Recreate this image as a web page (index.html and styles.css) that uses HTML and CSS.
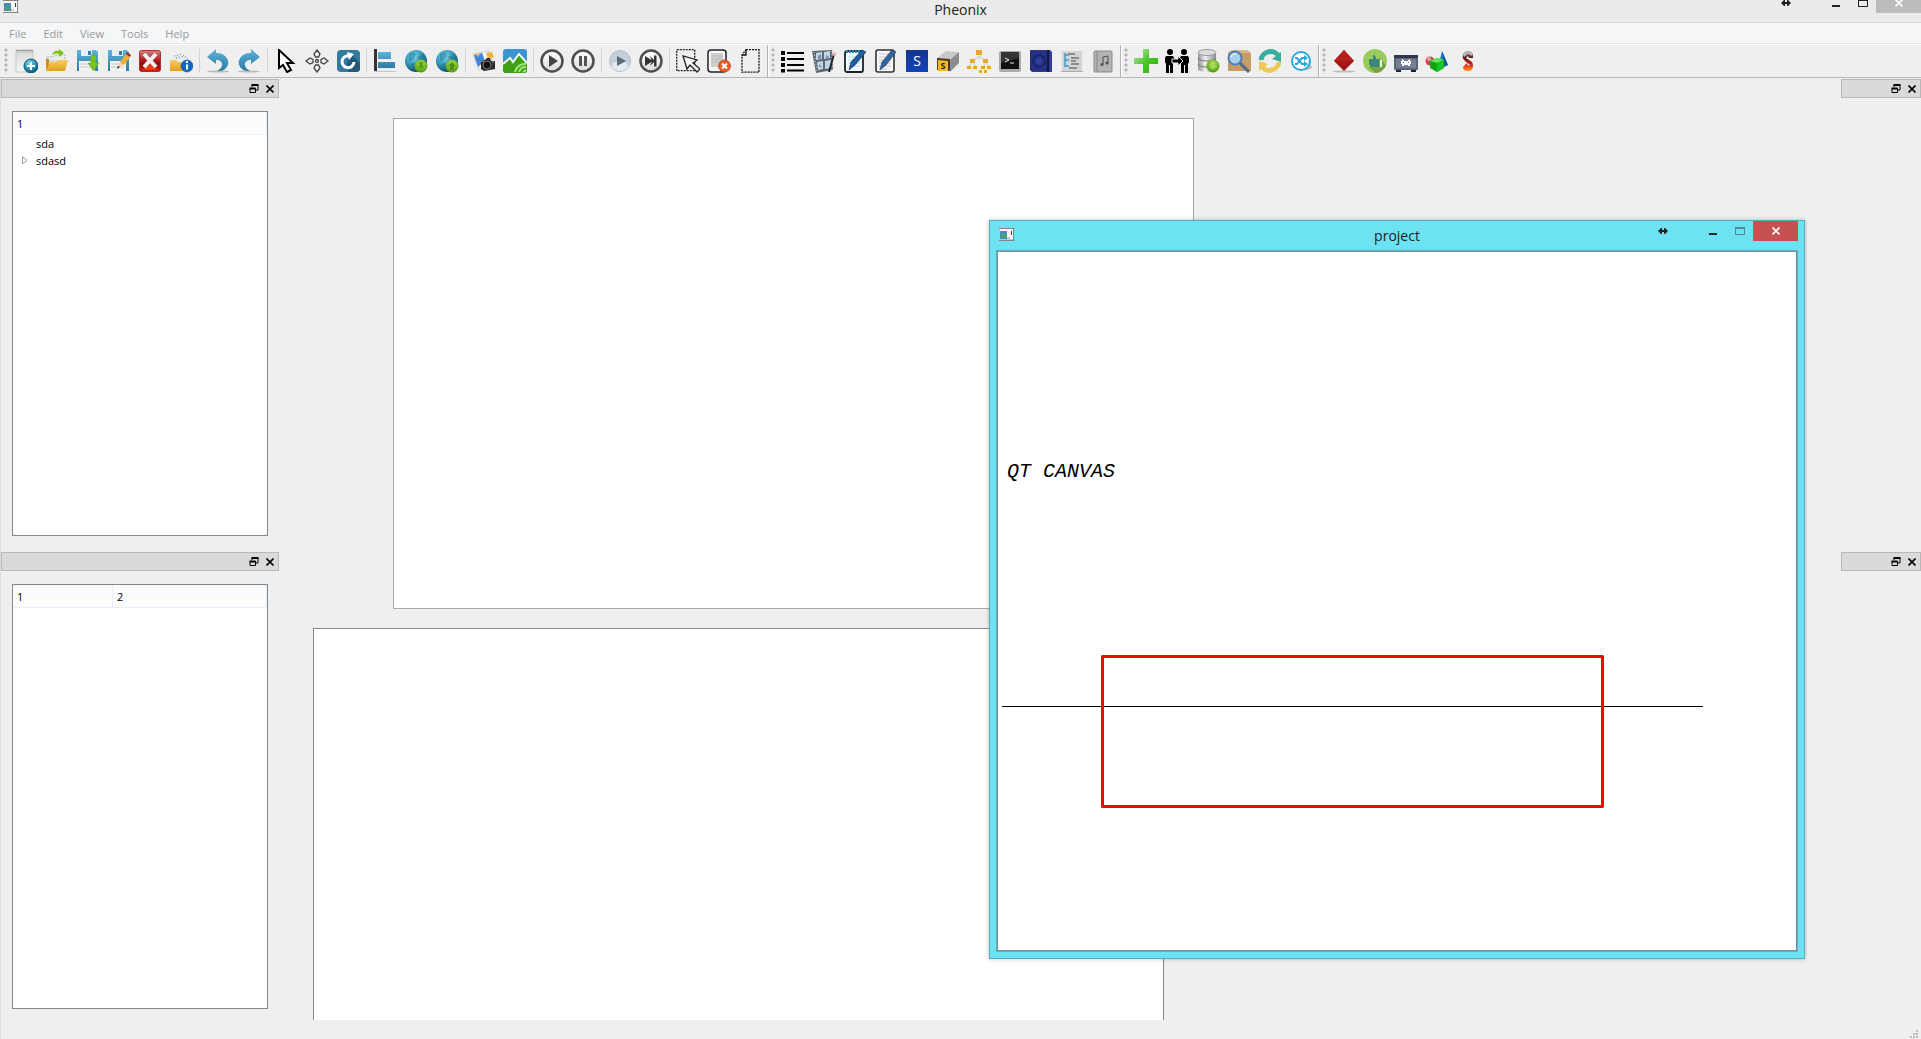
FILE: index.html
```html
<!DOCTYPE html>
<html lang="en">
<head>
<meta charset="utf-8">
<title>Pheonix</title>
<link rel="stylesheet" href="styles.css">
</head>
<body>
<svg class="defs" width="0" height="0" aria-hidden="true">
  <defs>
    <linearGradient id="blue" x1="0" y1="0" x2="0" y2="1"><stop offset="0" stop-color="#5fb3dc"/><stop offset="1" stop-color="#2b7ba3"/></linearGradient>
    <linearGradient id="gold" x1="0" y1="0" x2="0" y2="1"><stop offset="0" stop-color="#f9cc62"/><stop offset="1" stop-color="#e2a01c"/></linearGradient>
    <linearGradient id="paper" x1="0" y1="0" x2="0" y2="1"><stop offset="0" stop-color="#b9bbbc"/><stop offset=".2" stop-color="#dfe0e1"/><stop offset="1" stop-color="#f6f6f6"/></linearGradient>
    <linearGradient id="red" x1="0" y1="0" x2="0" y2="1"><stop offset="0" stop-color="#d98080"/><stop offset=".45" stop-color="#b32020"/><stop offset=".6" stop-color="#8c0f0f"/><stop offset="1" stop-color="#c81c10"/></linearGradient>
    <radialGradient id="globe" cx=".4" cy=".3" r=".7"><stop offset="0" stop-color="#7ad6ee"/><stop offset=".6" stop-color="#2f93b5"/><stop offset="1" stop-color="#115068"/></radialGradient>
    <radialGradient id="lime" cx=".5" cy=".35" r=".65"><stop offset="0" stop-color="#b6e45c"/><stop offset="1" stop-color="#4c9a0c"/></radialGradient>
    <linearGradient id="disc" x1="0" y1="0" x2="0" y2="1"><stop offset="0" stop-color="#fff"/><stop offset="1" stop-color="#dcdcdc"/></linearGradient>
    <linearGradient id="green" x1="0" y1="0" x2="1" y2="1"><stop offset="0" stop-color="#bfe8b4"/><stop offset=".5" stop-color="#4cc62c"/><stop offset="1" stop-color="#23b400"/></linearGradient>
    <linearGradient id="steel" x1="0" y1="0" x2="1" y2="0"><stop offset="0" stop-color="#8f9193"/><stop offset=".4" stop-color="#f0f0f0"/><stop offset="1" stop-color="#8a8c8e"/></linearGradient>
    <linearGradient id="navy" x1="0" y1="0" x2="0" y2="1"><stop offset="0" stop-color="#16328f"/><stop offset="1" stop-color="#1443b8"/></linearGradient>
    <linearGradient id="flame" x1="0" y1="0" x2="0" y2="1"><stop offset="0" stop-color="#777"/><stop offset=".35" stop-color="#5a1512"/><stop offset=".65" stop-color="#e01b12"/><stop offset="1" stop-color="#ffa126"/></linearGradient>
    <symbol id="app" viewBox="0 0 16 14"><path d="M1 1h13v10H1z" fill="#fafafa"/><path d="M0 .5h15.500M0 12.500h15.500M14.500 0v13" stroke="#858585" fill="none"/><path d="M1 3h7v8H1z" fill="#4c87b5"/><path d="M2 7l3-2 2 2v3H2z" fill="#4aa36e"/><path d="M8 9h3v2H8z" fill="#ccc"/><path d="M12 3h1v4h-1z" fill="#26406e"/></symbol>
    <symbol id="float" viewBox="0 0 10 10"><path d="M3 3V1h6v5H7" fill="none" stroke="#000"/><path d="M2.500 1h7" stroke="#000" stroke-width="2"/><path d="M1 4.500h5.500v4H1z" fill="none" stroke="#000"/><path d="M.5 4.500h6" stroke="#000" stroke-width="2"/></symbol>
    <symbol id="cross" viewBox="0 0 8 8"><path d="M.5.5l7 7M7.500.5l-7 7" stroke="currentColor" stroke-width="1.600"/></symbol>
    <symbol id="arrows" viewBox="0 0 10 8"><path d="M0 4l3-3h1v2h2V1h1l3 3-3 3H6V5H4v2H3z" fill="currentColor"/></symbol>
  </defs>
</svg>

<div class="app">
  <header class="titlebar">
    <svg class="app-icon" width="16" height="14"><use href="#app"/></svg>
    <h1 class="title">Pheonix</h1>
    <div class="controls">
      <button class="ctl resize" aria-label="Resize"><svg width="10" height="8"><use href="#arrows"/></svg></button>
      <button class="ctl" aria-label="Minimize"><svg width="10" height="8"><path d="M0 6h8v2H0z" fill="currentColor"/></svg></button>
      <button class="ctl" aria-label="Maximize"><svg width="10" height="8"><path d="M0 0h10v8H0zM1 2v5h8V2z" fill="currentColor" fill-rule="evenodd"/></svg></button>
      <button class="ctl close" aria-label="Close"><svg width="8" height="8"><use href="#cross"/></svg></button>
    </div>
  </header>

  <nav class="menubar">
    <button class="menu">File</button><button class="menu">Edit</button><button class="menu">View</button><button class="menu">Tools</button><button class="menu">Help</button>
  </nav>

  <div class="toolbars">
    <div class="toolbar" role="toolbar" aria-label="Main">
      <span class="grip"></span>
      <button class="tool" aria-label="New"><svg viewBox="0 0 24 24"><path d="M2 1h17v22H2z" fill="url(#paper)" stroke="#c4c6c7"/><path d="M2 1h17v1H2z" fill="#9fa1a2"/><circle cx="17" cy="17" r="7" fill="url(#globe)" stroke="#0f5876"/><path d="M17 13v8M13 17h8" stroke="#fff" stroke-width="2"/></svg></button>
      <button class="tool" aria-label="Open"><svg viewBox="0 0 24 24"><path d="M2 8h6l2-2h10v6H2z" fill="#e9ecee" stroke="#aab4b8" stroke-dasharray="2 1"/><path d="M1 10h3v10H1z" fill="#cf8f14"/><path d="M5 13h6l2-2h10l-3 11H1z" fill="url(#gold)"/><path d="M7 6c1-4 5-5 7-4V0l5 4-5 4V5c-3-1-5 0-7 1z" fill="#7cc40e"/></svg></button>
      <button class="tool" aria-label="Save"><svg viewBox="0 0 24 24"><path d="M1 1h19l2 2v19H1z" fill="url(#blue)"/><path d="M5 1h11v6H5z" fill="#e8f0f4"/><path d="M12 2h3v4h-3z" fill="#2f7fa8"/><path d="M3 12h16v10H3z" fill="#f3f3f3"/><path d="M4 15h12M4 18h12" stroke="#c2c8ca"/><path d="M15 6h5v8h3l-5.500 8L12 14h3z" fill="#78c41d" stroke="#5da312" stroke-width=".5"/></svg></button>
      <button class="tool" aria-label="Save as"><svg viewBox="0 0 24 24"><path d="M1 1h19l2 2v19H1z" fill="url(#blue)"/><path d="M5 1h11v6H5z" fill="#e8f0f4"/><path d="M12 2h3v4h-3z" fill="#2f7fa8"/><path d="M3 12h16v10H3z" fill="#f3f3f3"/><path d="M4 15h12M4 18h12" stroke="#c2c8ca"/><path d="M11 18l2-5 6-8 4 3-6 8z" fill="#f0ad2d"/><path d="M19 5l1-2 4 3-1 2z" fill="#a22a24"/><path d="M13 13l4 3-6 3z" fill="#eed7ae"/><path d="M11 17l2 1-3 2z" fill="#222"/></svg></button>
      <button class="tool" aria-label="Delete"><svg viewBox="0 0 24 24"><rect x="1.500" y="1.500" width="21" height="21" rx="2" fill="url(#red)" stroke="#a33"/><path d="M12 15l8 6H4z" fill="#f53a12"/><path d="M6 5l12 13M18 5L6 18" stroke="#f2f2f2" stroke-width="4"/></svg></button>
      <button class="tool" aria-label="Properties"><svg viewBox="0 0 24 24"><path d="M3 9l3-3 8-1 7 4v4H3z" fill="#e9ecee"/><path d="M5 7l8-2M7 9l9-2M14 6l5 4" stroke="#567f91" stroke-dasharray="1 2"/><path d="M1 11h6l2 2h12v9H1z" fill="url(#gold)"/><circle cx="18" cy="17" r="6" fill="#1469bd" stroke="#0c4a8d" stroke-width=".5"/><path d="M18 12v2M18 15.500v5" stroke="#fff" stroke-width="2"/></svg></button>
      <span class="sep"></span>
      <button class="tool" aria-label="Undo"><svg viewBox="0 0 24 24"><ellipse cx="12" cy="22.500" rx="11" ry="1" fill="#bbb"/><path d="M10 0v4c9-1 17 9 9 16-2 2-5 2-8 2 7-3 7-11-1-11v4L1 8z" fill="url(#blue)"/></svg></button>
      <button class="tool" aria-label="Redo"><svg viewBox="0 0 24 24"><ellipse cx="12" cy="22.500" rx="11" ry="1" fill="#bbb"/><path d="M14 0v4C5 3-3 13 5 20c2 2 5 2 8 2-7-3-7-11 1-11v4l9-7z" fill="url(#blue)"/></svg></button>
      <span class="sep"></span>
      <button class="tool" aria-label="Pointer"><svg viewBox="0 0 24 24"><path d="M5 1v18l4-3 4 7 4-2-4-7h6z" fill="#fff" stroke="#000" stroke-width="2"/></svg></button>
      <button class="tool" aria-label="Move"><svg viewBox="0 0 24 24" fill="none" stroke="#444" stroke-width="1.300"><path d="M12 1l3 4-1.500 3h-3L9 5zM12 23l3-4-1.500-3h-3L9 19zM1 12l4-3 3 1.500v3L5 15zM23 12l-4-3-3 1.500v3l3 1.500z"/><circle cx="12" cy="12" r="1.500"/></svg></button>
      <button class="tool" aria-label="Rotate"><svg viewBox="0 0 24 24"><rect x="1" y="1" width="23" height="22" rx="4" fill="#31799d"/><path d="M9 19l6-14 9 9v5a4 4 0 0 1-4 4h-7z" fill="#225a78"/><path d="M15 7.500A6 6 0 1 0 18 13" fill="none" stroke="#fff" stroke-width="3"/><path d="M11 3l7 2-5 6z" fill="#fff"/></svg></button>
      <span class="sep"></span>
      <button class="tool" aria-label="Align left"><svg viewBox="0 0 24 24"><path d="M2 22.500h21" stroke="#c4c4c4"/><path d="M1 0h3v22H1z" fill="#333"/><path d="M5 3h13v7H5zM5 13h17v6H5z" fill="url(#blue)"/></svg></button>
      <button class="tool" aria-label="Download"><svg viewBox="0 0 24 24"><circle cx="12" cy="12" r="11" fill="url(#globe)"/><path d="M5 5l5-2 2 3-3 5-4 1zM13 8l6-3 3 4-6 4zM6 15l4-1 2 5-3 2z" fill="#14627f" opacity=".4"/><circle cx="17" cy="17" r="6.500" fill="url(#lime)"/><path d="M15 13h4v4h2l-4 4-4-4h2z" fill="#5ca51a"/></svg></button>
      <button class="tool" aria-label="Upload"><svg viewBox="0 0 24 24"><circle cx="12" cy="12" r="11" fill="url(#globe)"/><path d="M5 5l5-2 2 3-3 5-4 1zM13 8l6-3 3 4-6 4zM6 15l4-1 2 5-3 2z" fill="#14627f" opacity=".4"/><circle cx="17" cy="17" r="6.500" fill="url(#lime)"/><path d="M15 21h4v-4h2l-4-4-4 4h2z" fill="#4d9214"/></svg></button>
      <span class="sep"></span>
      <button class="tool" aria-label="Capture"><svg viewBox="0 0 24 24"><path d="M1 5l16-3 4 12-14 7z" fill="#f4f4f4" stroke="#ccc"/><path d="M2 6l8-2 3 8-7 6z" fill="#3e87e0"/><path d="M14 4l6-1 2 5-6 2z" fill="#eeb443"/><path d="M3 4l5 1-2 3z" fill="#f4bd46"/><path d="M9 11h4l2-2h3l1 3h4v8l-11 2-3-2z" fill="#292b2d"/><circle cx="15" cy="16" r="4" fill="#111" stroke="#777"/><path d="M9 12h3M20 13h2" stroke="#aaa"/></svg></button>
      <button class="tool" aria-label="Landscape"><svg viewBox="0 0 24 24"><defs><clipPath id="tile"><rect width="24" height="24" rx="3"/></clipPath></defs><g clip-path="url(#tile)"><path d="M0 0h24v24H0z" fill="#3d94d0"/><path d="M0 15l7-6 3 4 6-8 8 9v10H0z" fill="#3f9f16"/><path d="M0 15l7-6 3 4 6-8 8 9" fill="none" stroke="#f1fbe9" stroke-width="2"/><path d="M12 23a10 10 0 0 1 11-8M16 23a7 7 0 0 1 7-5M20 23l3-2" fill="none" stroke="#a6e579" stroke-width="2"/></g></svg></button>
      <span class="sep"></span>
      <button class="tool" aria-label="Play"><svg viewBox="0 0 24 24"><circle cx="12" cy="12" r="10.500" fill="url(#disc)" stroke="#4e4e4e" stroke-width="2.500"/><path d="M9 6l9 6-9 6z" fill="#444"/></svg></button>
      <button class="tool" aria-label="Pause"><svg viewBox="0 0 24 24"><circle cx="12" cy="12" r="10.500" fill="url(#disc)" stroke="#4e4e4e" stroke-width="2.500"/><path d="M8 7h3v10H8zM13 7h3v10h-3z" fill="#555"/></svg></button>
      <span class="sep"></span>
      <button class="tool" aria-label="Run"><svg viewBox="0 0 24 24"><circle cx="12" cy="12" r="10.500" fill="#c3ced9" stroke="#b4bfca"/><ellipse cx="12" cy="17" rx="8" ry="5" fill="#e3eaf0"/><path d="M9 7l9 5-9 5z" fill="#5d6c7c"/></svg></button>
      <button class="tool" aria-label="Next"><svg viewBox="0 0 24 24"><circle cx="12" cy="12" r="10.500" fill="url(#disc)" stroke="#4e4e4e" stroke-width="2.500"/><path d="M6 7l8 5-8 5zM15 6.500h2.500v11H15zM11 7l4 4v2l-4 4 2-5z" fill="#333"/></svg></button>
      <span class="sep"></span>
      <button class="tool" aria-label="Select area"><svg viewBox="0 0 24 24" fill="none" stroke="#222" stroke-width="1.300"><path d="M.7.7h18v21H.7z" stroke-dasharray="2 1"/><path d="M7 7l4 13 3-4 7 7 3-3-7-6 4-3z" fill="#f7f7f7"/></svg></button>
      <button class="tool" aria-label="Remove page"><svg viewBox="0 0 24 24"><rect x="1" y="1" width="18" height="22" rx="3" fill="#f5f5f5" stroke="#222" stroke-width="1.500"/><path d="M4 4h12v14H4z" fill="#cfcfcf"/><path d="M4 7h12M4 10h12M4 13h9" stroke="#bbb"/><circle cx="17.500" cy="17" r="6" fill="#ea5b25" stroke="#b53a12" stroke-width=".7"/><path d="M15 14.500l5 5M20 14.500l-5 5" stroke="#fff" stroke-width="2"/></svg></button>
      <button class="tool" aria-label="Blank page"><svg viewBox="0 0 24 24" fill="none" stroke="#111" stroke-width="1.300"><path d="M8 .7h13v22.500H4V6z" stroke-dasharray="2 1"/><path d="M8 1v5H4"/></svg></button>
    </div>

    <div class="toolbar" role="toolbar" aria-label="Resources">
      <span class="grip"></span>
      <button class="tool" aria-label="List"><svg viewBox="0 0 24 24"><path d="M6 4h17M6 10h17M6 16h17M6 21.500h17" stroke="#000" stroke-width="1.800"/><path d="M0 2h4v4H0zM0 8h4v4H0zM0 14h4v4H0zM0 20h4v3.500H0z"/></svg></button>
      <button class="tool" aria-label="Movie"><svg viewBox="0 0 24 24"><path d="M0 2l20-1 1 20-17 3z" fill="#60686f"/><path d="M4 4l6-1v7l-6 1zM12 3l6-1v7l-6 1zM5 13l6-1v8l-5 1zM13 12l6-1v8l-6 1z" fill="#bfd5ea"/><path d="M6 7l3-2v5H6zM14 6l3 2v2h-3zM7 15l3 3H7z" fill="#7390b1"/><path d="M2 3l3 20M20 2v19" stroke="#ddd" stroke-dasharray="1 2"/><path d="M22 5l-5 18" stroke="#222" stroke-width="2"/><path d="M20 3l2 2 1-3 1 4-3 1z" fill="#e3a2af"/></svg></button>
      <button class="tool" aria-label="Notes"><svg viewBox="0 0 24 24"><rect x="2" y="2" width="18" height="21" rx="2" fill="#f4fbff" stroke="#1c2226" stroke-width="1.800"/><path d="M3 2.500h17" stroke="#158cb5" stroke-width="3" stroke-dasharray="2 1"/><path d="M5 8h12M5 11h12M5 14h12M5 17h12" stroke="#b9dcea"/><path d="M19 1l4 2-11 13-6 5 2-8z" fill="#1f5da0" stroke="#16385f" stroke-width=".7"/></svg></button>
      <button class="tool" aria-label="Edit script"><svg viewBox="0 0 24 24"><rect x="2" y="1" width="18" height="22" rx="2" fill="#f7f7f7" stroke="#333" stroke-width="1.600"/><path d="M5 5h10M5 8h12M5 11h12M5 14h12M5 17h12M5 20h8" stroke="#c6c6c6"/><path d="M18 1l4 2-10 13-6 5 2-8z" fill="#2f66a2" stroke="#1e3f66" stroke-width=".7"/></svg></button>
      <button class="tool" aria-label="Styles"><svg viewBox="0 0 24 24"><path d="M1 1h22v22H1z" fill="url(#navy)"/><text x="12" y="17" class="glyph" text-anchor="middle">S</text></svg></button>
      <button class="tool" aria-label="Assets"><svg viewBox="0 0 24 24"><path d="M1 9l9-7 13 1-8 8z" fill="#c9c9c9"/><path d="M14 11l9-8v11l-9 9z" fill="#8d8d8d"/><path d="M1 9l13 1v12L1 21z" fill="#453b25"/><path d="M2 11l10 1v10H2z" fill="#f4bd1c"/><text x="7" y="20" class="glyph-small" text-anchor="middle">S</text></svg></button>
      <button class="tool" aria-label="Hierarchy"><svg viewBox="0 0 24 24"><path d="M12 5v6M5 12l7-5 7 5M5 13l-3 5M6 13l3 5M19 13l-3 5M19 13l3 5" fill="none" stroke="#ccc"/><path d="M9 1h6v5H9zM3 10h5v4H3zM16 10h5v4h-5zM0 17h4v3H0zM6 17h4v3H6zM14 17h4v3h-4zM20 17h4v3h-4zM12 21h3v3h-3zM17 21h3v3h-3z" fill="#eda52d"/></svg></button>
      <button class="tool" aria-label="Terminal"><svg viewBox="0 0 24 24"><rect x="1" y="2" width="22" height="21" rx="2" fill="#a8abae"/><path d="M3 3h18v17H3z" fill="#111"/><path d="M3 3h18v6L3 14z" fill="#333"/><path d="M7 9l4 2-4 2M12 14h4" fill="none" stroke="#eee"/></svg></button>
      <button class="tool" aria-label="Safe"><svg viewBox="0 0 24 24"><path d="M1 1h20l2 2v20H3l-2-2z" fill="#303a91"/><path d="M2 3h16v18H2z" fill="#27328a" stroke="#202a70"/><circle cx="10" cy="12" r="6" fill="none" stroke="#172060" stroke-width="1.500"/><circle cx="10" cy="12" r="2.500" fill="#3743a4"/><path d="M19 1v22" stroke="#111842" stroke-width="2"/></svg></button>
      <button class="tool" aria-label="Outline"><svg viewBox="0 0 24 24"><path d="M1 22.500h22" stroke="#aaa"/><rect x="2" y="2" width="20" height="20" rx="1" fill="#d1d3d4"/><path d="M5 4v14M5 6h4M5 11h4M5 17h4" stroke="#3e9ac4" stroke-width="1.500" fill="none"/><path d="M8 5h7M11 9h8M11 12h5M11 15h8M9 19h8" stroke="#777" stroke-width="1.500"/></svg></button>
      <button class="tool" aria-label="Audio"><svg viewBox="0 0 24 24"><rect x="3" y="2" width="18" height="21" rx="1" fill="#b2b3b3" stroke="#8b8b8b"/><path d="M6 2v20" stroke="#858585"/><path d="M12 15V8l5-1v7" fill="none" stroke="#4e4e4e"/><circle cx="11" cy="15.500" r="1.500" fill="#4e4e4e"/><circle cx="16" cy="14" r="1.500" fill="#4e4e4e"/></svg></button>
    </div>

    <div class="toolbar" role="toolbar" aria-label="Project">
      <span class="grip"></span>
      <button class="tool" aria-label="Add"><svg viewBox="0 0 24 24"><path d="M9 0h6v9h9v6h-9v9H9v-9H0V9h9z" fill="url(#green)"/></svg></button>
      <button class="tool" aria-label="Share"><svg viewBox="0 0 24 24"><circle cx="5" cy="3" r="3"/><circle cx="19" cy="3" r="3"/><path d="M1 7h7l3 5-2 1-1-2v13H5v-8H4v8H1v-9l-1-2V9zM23 7h-7l-3 5 2 1 1-2v13h3v-8h1v8h3v-9l1-2V9z"/><path d="M7 10h6V7l5 5-5 5v-3H7z" stroke="#efefef" stroke-width="1"/></svg></button>
      <button class="tool" aria-label="Database"><svg viewBox="0 0 24 24"><path d="M2 3v17c0 4 18 4 18 0V3z" fill="url(#steel)"/><ellipse cx="11" cy="3.500" rx="9" ry="3" fill="#dcdcdc" stroke="#999"/><path d="M2 9c0 4 18 4 18 0M2 15c0 4 18 4 18 0" fill="none" stroke="#777"/><circle cx="17" cy="17" r="6.500" fill="url(#lime)"/><path d="M15.500 13h3v4h2L17 20.500 13.500 17h2z" fill="#a5d95f"/></svg></button>
      <button class="tool" aria-label="Find"><svg viewBox="0 0 24 24"><path d="M1 4l4-3h15l4 3v18H1z" fill="#c59c68"/><path d="M1 4l4-3h15l4 3z" fill="#dab987"/><circle cx="8" cy="9" r="6.500" fill="#a9cfea" stroke="#4f7fb1" stroke-width="2"/><path d="M4 8a4 4 0 0 1 5-3" stroke="#fff" fill="none"/><path d="M13 14l9 9" stroke="#526b8b" stroke-width="3"/></svg></button>
      <button class="tool" aria-label="Sync"><svg viewBox="0 0 24 24" fill="none" stroke-width="5"><path d="M3 11c1-9 14-12 18-3" stroke="#36b09a"/><path d="M23 3v10l-9-3z" fill="#36b09a"/><path d="M21 13c-1 9-14 12-18 3" stroke="#efc957"/><path d="M1 22V12l9 3z" fill="#efc957"/></svg></button>
      <button class="tool" aria-label="Shuffle"><svg viewBox="0 0 24 24"><ellipse cx="16" cy="18" rx="7" ry="3" fill="#bbb"/><circle cx="12" cy="12" r="9" fill="#fff" stroke="#2ba7df" stroke-width="2"/><path d="M6 9h2l5 6h3M6 15h2l5-6h3" fill="none" stroke="#2ba7df" stroke-width="2"/><path d="M15 6l4 3-4 3zM15 12l4 3-4 3z" fill="#2ba7df"/></svg></button>
    </div>

    <div class="toolbar last" role="toolbar" aria-label="Plugins">
      <span class="grip"></span>
      <button class="tool" aria-label="Ruby"><svg viewBox="0 0 24 24"><ellipse cx="12" cy="22.500" rx="11" ry="1" fill="#bbb"/><path d="M12 1l10 11-10 10L2 12z" fill="#a81515"/><path d="M12 1l10 11H2z" fill="#b51f1f"/></svg></button>
      <button class="tool" aria-label="Like"><svg viewBox="0 0 24 24"><circle cx="12" cy="12" r="12" fill="#9bcb5f"/><path d="M6 18l11-9 6 7a12 12 0 0 1-11 8z" fill="#76a647"/><path d="M6 10h4V6c3 0 3 3 3 4h3v8H8l-2-3z" fill="#3b8877"/><path d="M17 11h2v7h-2z" fill="#e9f4f0"/></svg></button>
      <button class="tool" aria-label="Arcade"><svg viewBox="0 0 24 24"><path d="M2 20h5v3H2zM17 20h5v3h-5z" fill="#222"/><rect y="6" width="24" height="15" rx="1" fill="#5a6479"/><path d="M0 6h24v3H0z" fill="#303746"/><path d="M2 10h20v9H2z" fill="#747f95"/><path d="M8 10h1v1h1v1h4v-1h1v-1h1v2h1v3h-1v2h-2v-1h-4v1H8v-2H7v-3h1z" fill="#fff"/><path d="M9 13h1v1H9zM14 13h1v1h-1z" fill="#606b82"/></svg></button>
      <button class="tool" aria-label="Shapes"><svg viewBox="0 0 24 24"><circle cx="5" cy="12" r="4.500" fill="#c14c4c"/><circle cx="4" cy="10" r="2" fill="#eba4a4"/><path d="M17 2l6 14-10 2z" fill="#1d86d0"/><path d="M17 2l6 14-4 2z" fill="#10599a"/><path d="M5 12l7-3 7 2v8l-7 4-7-4z" fill="#11a516"/><path d="M5 12l7-3 7 2-7 3z" fill="#67e55a"/><path d="M12 14l7-3v8l-7 4z" fill="#17c520"/></svg></button>
      <button class="tool" aria-label="Engine"><svg viewBox="0 0 24 24"><path d="M7 6c1-5 9-5 10 0v3h-4l-1-2-2 2 6 4c3 6-1 10-5 9-3 0-4-2-4-4l4-4 1 3 2-1-5-4c-2-2-3-4-2-6z" fill="url(#flame)"/><path d="M7 5c2-4 8-4 10 0l-1 2-4-2-4 3z" fill="#b4b4b4"/></svg></button>
    </div>
  </div>

  <main class="workspace">
    <aside class="docks">
      <section class="dock">
        <div class="dock-title"><button class="dock-btn" aria-label="Float"><svg width="10" height="10"><use href="#float"/></svg></button><button class="dock-btn" aria-label="Close"><svg width="8" height="8"><use href="#cross"/></svg></button></div>
        <div class="view">
          <div class="view-head">1</div>
          <ul class="tree">
            <li class="node">sda</li>
            <li class="node"><svg class="twisty" width="6" height="9"><path d="M.5.8v7l4.500-3.500z" fill="#fff" stroke="#999"/></svg>sdasd</li>
          </ul>
        </div>
      </section>
      <section class="dock">
        <div class="dock-title"><button class="dock-btn" aria-label="Float"><svg width="10" height="10"><use href="#float"/></svg></button><button class="dock-btn" aria-label="Close"><svg width="8" height="8"><use href="#cross"/></svg></button></div>
        <div class="view">
          <table class="props"><thead><tr><th class="key" scope="col">1</th><th scope="col">2</th></tr></thead></table>
        </div>
      </section>
    </aside>

    <div class="center">
      <div class="scene"></div>
      <div class="output"></div>
    </div>

    <aside class="docks">
      <section class="dock"><div class="dock-title"><button class="dock-btn" aria-label="Float"><svg width="10" height="10"><use href="#float"/></svg></button><button class="dock-btn" aria-label="Close"><svg width="8" height="8"><use href="#cross"/></svg></button></div></section>
      <section class="dock"><div class="dock-title"><button class="dock-btn" aria-label="Float"><svg width="10" height="10"><use href="#float"/></svg></button><button class="dock-btn" aria-label="Close"><svg width="8" height="8"><use href="#cross"/></svg></button></div></section>
    </aside>
  </main>

  <footer class="statusbar"><svg width="8" height="8" fill="#bbb"><path d="M6 0h2v2H6zM3 3h2v2H3zM6 3h2v2H6zM0 6h2v2H0zM3 6h2v2H3zM6 6h2v2H6z"/></svg></footer>
</div>

<section class="window">
  <header class="window-bar">
    <svg class="app-icon" width="16" height="14"><use href="#app"/></svg>
    <h2 class="title">project</h2>
    <div class="controls">
      <button class="ctl resize" aria-label="Resize"><svg width="10" height="8"><use href="#arrows"/></svg></button>
      <button class="ctl" aria-label="Minimize"><svg width="10" height="8"><path d="M0 6h8v2H0z" fill="currentColor"/></svg></button>
      <button class="ctl" aria-label="Maximize" disabled><svg width="10" height="8"><path d="M0 0h10v8H0zM1 2v5h8V2z" fill="currentColor" fill-rule="evenodd"/></svg></button>
      <button class="ctl close" aria-label="Close"><svg width="8" height="8"><use href="#cross"/></svg></button>
    </div>
  </header>
  <div class="window-body">
    <svg class="drawing" width="798" height="698">
      <text x="9" y="225" class="drawing-text">QT CANVAS</text>
      <rect x="4" y="454" width="701" height="1" shape-rendering="crispEdges"/>
      <rect x="104.500" y="404.500" width="500" height="150" fill="none" stroke="#f00" stroke-width="3" stroke-linejoin="round"/>
    </svg>
  </div>
</section>
</body>
</html>
```

FILE: styles.css
```css
* { box-sizing: border-box; }

body {
  margin: 0;
  background: #efefef;
  color: #000;
  font: 11px/17px "Open Sans", "Noto Sans", sans-serif;
}

button {
  margin: 0;
  padding: 0;
  border: 0;
  background: none;
  color: inherit;
  font: inherit;
}

svg { display: block; flex: none; }
.defs { position: absolute; }

.app {
  display: flex;
  flex-direction: column;
  min-height: 100vh;
}

/* Window title bars */
.titlebar {
  display: grid;
  grid-template-columns: 1fr auto 1fr;
  height: 22px;
  overflow: hidden;
  background: #ebebeb;
}

.title {
  margin: 0;
  font-size: 14px;
  font-weight: 400;
  line-height: 19px;
  color: #222;
}

.titlebar .app-icon { margin-left: 3px; }

.controls {
  display: flex;
  justify-content: flex-end;
  color: #222;
}

.titlebar .controls { margin-top: -7px; }

.ctl {
  display: flex;
  align-items: center;
  justify-content: center;
  width: 26px;
  height: 20px;
}

.ctl.resize { margin-right: 25px; }
.ctl:disabled { color: #4a8d98; }

.ctl.close {
  width: 45px;
  background: #bcbcbc;
  color: #fff;
}

/* Menu bar */
.menubar {
  display: flex;
  height: 22px;
  padding-left: 1px;
  border-top: 1px solid #d8d9da;
  border-bottom: 1px solid #e6e6e6;
  background: #f5f6f7;
}

.menu {
  padding: 0 9px 0 8px;
  color: #999;
}

/* Tool bars */
.toolbars {
  display: flex;
  height: 34px;
  padding-left: 2px;
  border-top: 1px solid #fff;
  border-bottom: 1px solid #b8b8b8;
}

.toolbar {
  display: flex;
  align-items: center;
  padding-right: 2px;
  border-right: 1px solid #b0b0b0;
  box-shadow: 1px 0 #fff;
  margin-right: 1px;
}

.toolbar.last { border: 0; box-shadow: none; }

.grip {
  width: 8px;
  height: 26px;
  background: radial-gradient(circle at 4px 2px, #b4b4b4 1px, transparent 2px) 0 0 / 8px 5px;
}

.tool {
  display: flex;
  align-items: center;
  justify-content: center;
  width: 31px;
  height: 32px;
}

.tool svg { width: 24px; height: 24px; }

.sep {
  width: 1px;
  height: 24px;
  margin: 0 2px 0 3px;
  background: #d2d2d2;
}

.glyph { fill: #fff; font-size: 14px; }
.glyph-small { fill: #222; font-size: 9px; font-weight: 700; }

/* Work area */
.workspace {
  flex: 1;
  display: grid;
  grid-template-columns: 278px 1fr 80px;
  padding-top: 1px;
  border-left: 1px solid #dcdcdc;
}

.docks {
  display: grid;
  grid-template-rows: 1fr 1fr;
}

.dock {
  display: flex;
  flex-direction: column;
}

.dock-title {
  display: flex;
  align-items: center;
  justify-content: flex-end;
  height: 19px;
  border: 1px solid #b8b8b8;
  background: #dadada;
}

.dock-btn {
  display: flex;
  align-items: center;
  justify-content: center;
  width: 16px;
  height: 16px;
}

.view {
  flex: 1;
  margin: 13px 11px 16px 11px;
  border: 1px solid #828790;
  background: #fff;
}

.view-head,
.props th {
  height: 23px;
  padding: 2px 4px 0;
  border-right: 1px solid #e5f0fb;
  border-bottom: 1px solid #e5f0fb;
  background: #fcfcfc;
  font-weight: 400;
  line-height: 20px;
  text-align: left;
}

.props {
  width: 100%;
  border-spacing: 0;
  table-layout: fixed;
}

.props .key { width: 100px; }

.tree {
  margin: 0;
  padding: 0;
  list-style: none;
}

.node {
  position: relative;
  height: 17px;
  padding-left: 23px;
}

.twisty {
  position: absolute;
  left: 9px;
  top: 4px;
}

.center {
  display: flex;
  flex-direction: column;
  align-items: flex-start;
  gap: 19px;
  padding: 39px 0 5px 34px;
}

.scene {
  width: 801px;
  height: 491px;
  margin-left: 80px;
  border: 1px solid #a5a7aa;
  background: #fff;
}

.output {
  flex: 1;
  width: 851px;
  border: 1px solid #828790;
  border-bottom: 0;
  background: #fff;
}

.statusbar {
  display: flex;
  align-items: flex-end;
  justify-content: flex-end;
  height: 14px;
  padding: 0 3px 1px;
  border-left: 1px solid #dcdcdc;
}

/* Floating project window */
.window {
  position: absolute;
  left: 989px;
  top: 220px;
  padding: 0 6px 6px;
  border: 1px solid #52aebc;
  background: #6ce2f3;
  box-shadow: 0 0 4px rgba(0, 0, 0, .25);
}

.window-bar {
  display: grid;
  grid-template-columns: 1fr auto 1fr;
  height: 29px;
}

.window-bar .app-icon { margin: 7px 0 0 3px; }
.window-bar .title { line-height: 29px; }
.window-bar .ctl.close { background: #c75050; }

.window-body {
  border: 1px solid #57b5c3;
  background: #fff;
  outline: 1px solid #828790;
  outline-offset: -2px;
}

.drawing { margin: 1px; }

.drawing-text {
  font: italic 20px "Liberation Mono", monospace;
}
```
